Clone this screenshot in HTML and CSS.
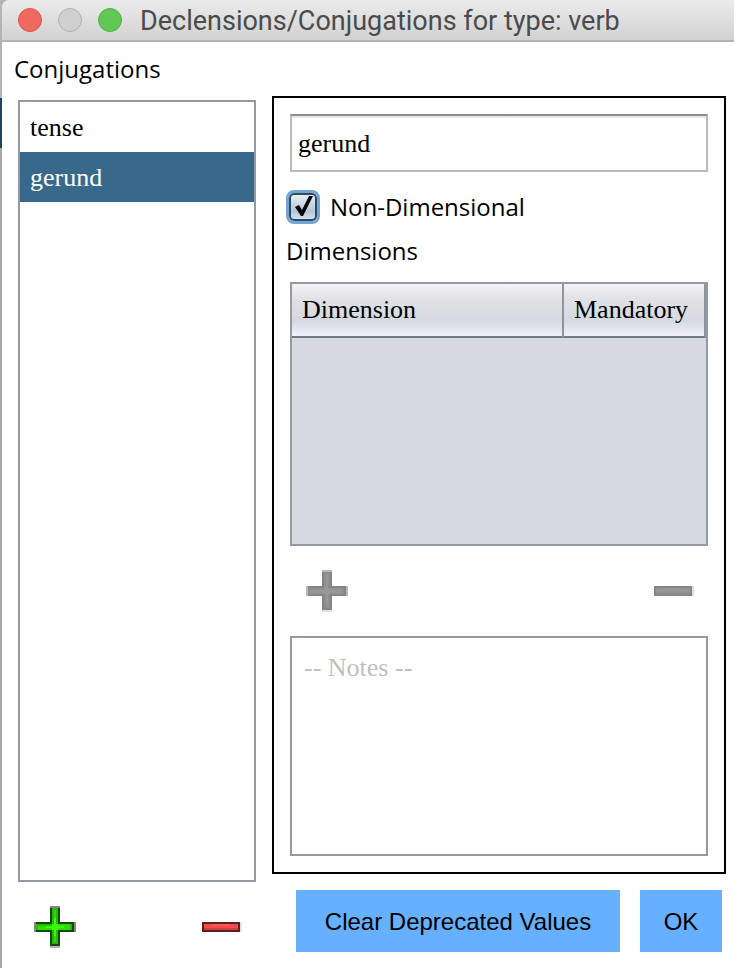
FILE: index.html
```html
<!DOCTYPE html>
<html lang="en">
<head>
<meta charset="utf-8">
<title>Declensions/Conjugations for type: verb</title>
<meta name="viewport" content="width=device-width, initial-scale=1">
<link rel="stylesheet" href="styles.css">
</head>
<body>
<svg class="symbols" aria-hidden="true">
  <symbol id="plus" viewBox="0 0 21 21">
    <path class="tip" d="M8 0h5v1h-5zM0 8h1v5h-1zM20 8h1v5h-1z"/>
    <path class="tip-light" d="M8 20h5v1h-5z"/>
    <path class="edge" d="M8 1h5v7h7v5h-7v7h-5v-7h-7v-5h7z"/>
    <path class="fill" d="M9 1h3v8h7v3h-7v7h-3v-7h-8v-3h8z"/>
    <path class="shine" d="M10 2h1v7h7v3h-7v6h-1v-6h-8v-2h8z"/>
    <path class="core" d="M10 6h1v3h1v1h3v1h-3v1h-1v3h-1v-3h-1v-1h-3v-1h3v-1h1z"/>
  </symbol>
  <symbol id="minus" viewBox="0 0 20 5">
    <path class="tip-light" d="M19 0h1v5h-1z"/>
    <path class="edge" d="M0 0h19v5h-19z"/>
    <path class="fill" d="M1 1h17v3h-17z"/>
    <path class="shine" d="M1 1h17v2h-17z"/>
    <path class="core" d="M5 1h9v1h-9z"/>
  </symbol>
</svg>
<div class="window">
  <header class="titlebar">
    <button class="light light-close" type="button" aria-label="Close"></button>
    <button class="light light-minimize" type="button" aria-label="Minimize" disabled></button>
    <button class="light light-zoom" type="button" aria-label="Zoom"></button>
    <h1 class="title">Declensions/Conjugations for type: verb</h1>
  </header>
  <main class="content">
    <section class="sidebar">
      <h2 class="label list-label" id="conj-label">Conjugations</h2>
      <ul class="list" role="listbox" aria-labelledby="conj-label">
        <li class="item" role="option" aria-selected="false">tense</li>
        <li class="item selected" role="option" aria-selected="true">gerund</li>
      </ul>
      <div class="tools list-tools">
        <button class="tool add" type="button" aria-label="Add conjugation"><svg class="plus"><use href="#plus"/></svg></button>
        <button class="tool remove" type="button" aria-label="Remove conjugation"><svg class="minus"><use href="#minus"/></svg></button>
      </div>
    </section>
    <section class="detail">
      <form class="panel" id="detail">
        <input class="name" type="text" value="gerund" aria-label="Name">
        <div class="check-row">
          <span class="check">
            <input class="check-input" type="checkbox" id="nondim" checked>
            <svg class="tick" viewBox="0 0 24 24" aria-hidden="true"><path d="M4 12 8 10 11 15 18 1 22 1 12 21 10 21Z"/></svg>
          </span>
          <label class="label" for="nondim">Non-Dimensional</label>
        </div>
        <h2 class="label dim-label" id="dim-label">Dimensions</h2>
        <div class="table-box">
          <table class="table" aria-labelledby="dim-label">
            <thead><tr><th scope="col">Dimension</th><th class="mandatory" scope="col">Mandatory</th></tr></thead>
          </table>
        </div>
        <div class="tools dim-tools">
          <button class="tool" type="button" aria-label="Add dimension" disabled><svg class="plus"><use href="#plus"/></svg></button>
          <button class="tool" type="button" aria-label="Remove dimension" disabled><svg class="minus"><use href="#minus"/></svg></button>
        </div>
        <textarea class="notes" placeholder="-- Notes --" aria-label="Notes"></textarea>
      </form>
      <div class="actions">
        <button class="action clear" type="button">Clear Deprecated Values</button>
        <button class="action" type="submit" form="detail">OK</button>
      </div>
    </section>
  </main>
</div>
</body>
</html>
```
FILE: styles.css
```css
* { box-sizing: border-box; }

body {
  margin: 0;
  padding-left: 2px;
  background: linear-gradient(#b4b4b4 98px, #1d4462 98px, #1d4462 148px, #a8a8a8 148px);
  color: #000;
  font: 26px/32px "Liberation Serif", serif;
}

button, input, textarea { font: inherit; color: inherit; }

.symbols { position: absolute; width: 0; height: 0; }

.window {
  display: flex;
  flex-direction: column;
  min-height: 100vh;
  background: #fff;
  border-top-left-radius: 8px;
}

.titlebar {
  display: flex;
  align-items: center;
  gap: 16px;
  height: 42px;
  padding: 0 16px;
  background: linear-gradient(#ebebeb, #d2d2d2);
  border-bottom: 2px solid #b4b4b4;
  border-top-left-radius: 8px;
}

.light {
  flex: none;
  width: 24px;
  height: 24px;
  padding: 0;
  border: 1px solid;
  border-radius: 50%;
}
.light-close { background: #ee6a5f; border-color: #dc5248; }
.light-minimize { background: #d0d0d0; border-color: #b0b0b0; }
.light-zoom { background: #62c855; border-color: #50b244; }

.title {
  margin: 0;
  padding: 2px 0 0 2px;
  color: #4b4b4b;
  font: 27px/32px Roboto, sans-serif;
  white-space: nowrap;
}

.content {
  flex: 1;
  display: flex;
  gap: 16px;
  padding-right: 8px;
}

.sidebar {
  flex: none;
  display: flex;
  flex-direction: column;
  width: 254px;
}

.label {
  margin: 0;
  font: 24px/32px "Open Sans", sans-serif;
}

.list-label { padding: 11px 12px 15px; }

.list {
  flex: 1;
  margin: 0 0 0 16px;
  padding: 0;
  list-style: none;
  border: 2px solid #9598a5;
}

.item { height: 50px; padding: 10px; line-height: 32px; }
.selected { background: #39698a; color: #fff; }

.tools { display: flex; align-items: center; justify-content: space-between; }
.list-tools { height: 86px; padding: 4px 14px 0 32px; }
.dim-tools { height: 90px; padding: 0 18px 0 20px; }

.tool {
  --tip: #b8b8b8;
  --tip-light: #dedede;
  --edge: #858585;
  --fill: #8f8f8f;
  --shine: #969696;
  --core: #999;
  display: flex;
  padding: 0;
  border: 0;
  background: none;
}
.add {
  --tip: #858585;
  --tip-light: #b4b4b4;
  --edge: #144a0c;
  --fill: #27b80a;
  --shine: #2fdc08;
  --core: #38ff06;
}
.remove {
  --tip-light: #e6e6e6;
  --edge: #5c2022;
  --fill: #cb4040;
  --shine: #f24b4b;
  --core: #ff5555;
}
.tool svg { shape-rendering: crispEdges; }
.plus { width: 42px; height: 42px; }
.minus { width: 40px; height: 10px; }

.tip { fill: var(--tip); }
.tip-light { fill: var(--tip-light); }
.edge { fill: var(--edge); }
.fill { fill: var(--fill); }
.shine { fill: var(--shine); }
.core { fill: var(--core); }

.detail {
  flex: 1;
  display: flex;
  flex-direction: column;
  min-width: 0;
  padding-top: 54px;
}

.panel {
  flex: 1;
  display: flex;
  flex-direction: column;
  padding: 16px 12px;
  border: 2px solid #000;
}

.name {
  height: 58px;
  margin: 0 4px;
  padding: 2px 6px 0;
  border: 2px solid #bababa;
  border-top-color: #8e8e8e;
  background: #fff linear-gradient(#dcdcdc, #fff) no-repeat 0 0 / 100% 3px;
  border-radius: 0;
}

.check-row {
  display: flex;
  align-items: center;
  gap: 10px;
  height: 38px;
  margin: 16px 0 9px;
}

.check { display: grid; }
.check > * { grid-area: 1 / 1; }
.check-input {
  appearance: none;
  width: 34px;
  height: 34px;
  margin: 0;
  border: 3px solid #75a5d3;
  border-radius: 8px;
  background: linear-gradient(#eff4f8, #b3c6d8 65%, #d7e6f2) padding-box;
  box-shadow: inset 0 0 0 2px #304a61;
}
.tick { place-self: center; width: 24px; height: 24px; pointer-events: none; }

.dim-label { padding-bottom: 15px; }

.table-box {
  height: 264px;
  margin: 0 4px;
  border: 2px solid #9598a5;
  background: #d6d9e0;
}

.table { width: 100%; border-collapse: separate; border-spacing: 0; }
.table th {
  height: 54px;
  padding: 0 10px;
  text-align: left;
  font-weight: 400;
  border-right: 2px solid #90949d;
  border-bottom: 2px solid #737883;
  background: linear-gradient(#f4f4f7, #e0e1e5 30%, #d6d9e0 70%, #eff2fb);
}
.table .mandatory { width: 142px; }

.notes {
  flex: 1;
  min-height: 120px;
  margin: 0 4px;
  padding: 14px 12px;
  border: 2px solid #9598a5;
  border-radius: 0;
  background: #fff;
  resize: none;
}
.notes::placeholder { color: #bfbfbf; opacity: 1; }

.actions {
  display: flex;
  gap: 20px;
  padding: 16px 4px 16px 24px;
}

.action {
  min-width: 82px;
  height: 62px;
  padding: 2px 22px 0;
  border: 0;
  background: #66b0ff;
  font: 24px/32px "Liberation Sans", sans-serif;
}
.clear { flex: 1; }
```
